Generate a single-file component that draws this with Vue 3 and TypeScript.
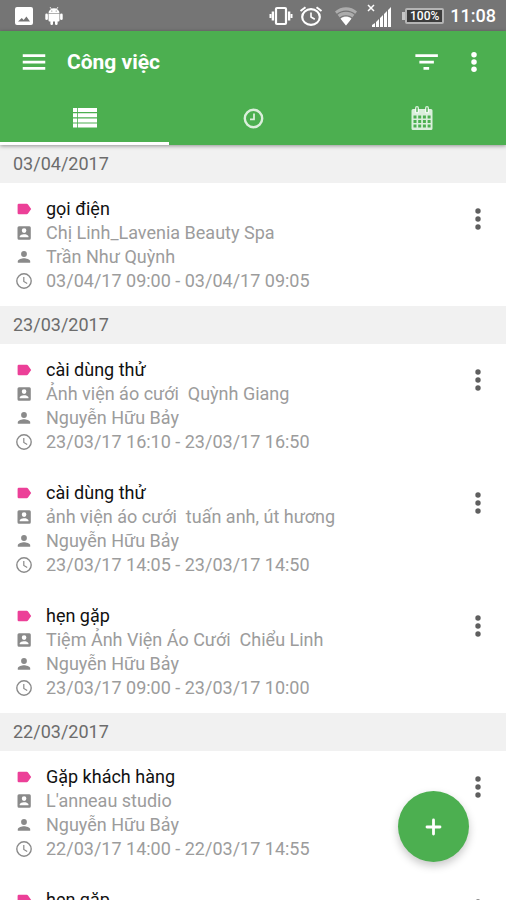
<script setup lang="ts">
import { ref } from 'vue'

interface Task {
  title: string
  customer: string
  owner: string
  time: string
}

interface DayGroup {
  date: string
  tasks: Task[]
}

type TabId = 'list' | 'clock' | 'calendar'

const activeTab = ref<TabId>('list')

const tabs: { id: TabId; label: string }[] = [
  { id: 'list', label: 'Danh sách' },
  { id: 'clock', label: 'Thời gian' },
  { id: 'calendar', label: 'Lịch' },
]

const groups: DayGroup[] = [
  {
    date: '03/04/2017',
    tasks: [
      {
        title: 'gọi điện',
        customer: 'Chị Linh_Lavenia Beauty Spa',
        owner: 'Trần Như Quỳnh',
        time: '03/04/17 09:00 - 03/04/17 09:05',
      },
    ],
  },
  {
    date: '23/03/2017',
    tasks: [
      {
        title: 'cài dùng thử',
        customer: 'Ảnh viện áo cưới  Quỳnh Giang',
        owner: 'Nguyễn Hữu Bảy',
        time: '23/03/17 16:10 - 23/03/17 16:50',
      },
      {
        title: 'cài dùng thử',
        customer: 'ảnh viện áo cưới  tuấn anh, út hương',
        owner: 'Nguyễn Hữu Bảy',
        time: '23/03/17 14:05 - 23/03/17 14:50',
      },
      {
        title: 'hẹn gặp',
        customer: 'Tiệm Ảnh Viện Áo Cưới  Chiểu Linh',
        owner: 'Nguyễn Hữu Bảy',
        time: '23/03/17 09:00 - 23/03/17 10:00',
      },
    ],
  },
  {
    date: '22/03/2017',
    tasks: [
      {
        title: 'Gặp khách hàng',
        customer: "L'anneau studio",
        owner: 'Nguyễn Hữu Bảy',
        time: '22/03/17 14:00 - 22/03/17 14:55',
      },
      {
        title: 'hẹn gặp',
        customer: '',
        owner: '',
        time: '',
      },
    ],
  },
]
</script>

<template>
  <div class="screen">
    <div class="status-bar">
      <div class="status-group status-left">
        <svg class="status-icon" viewBox="0 0 18 18" aria-hidden="true">
          <path fill="#fff" fill-rule="evenodd" d="M2 0h14a2 2 0 0 1 2 2v14a2 2 0 0 1-2 2H2a2 2 0 0 1-2-2V2a2 2 0 0 1 2-2zM3 14.500h12l-3.600-5-2.700 3.400-1.900-2z" />
        </svg>
        <svg class="status-icon" viewBox="0 0 18 18" aria-hidden="true">
          <g fill="#fff">
            <path d="M3.500 6.200a5.500 5 0 0 1 11 0z" />
            <path d="M3.500 6.800h11v6.700a1 1 0 0 1-1 1h-9a1 1 0 0 1-1-1z" />
            <rect x="0.300" y="6.500" width="2.600" height="6.500" rx="1.300" />
            <rect x="15.100" y="6.500" width="2.600" height="6.500" rx="1.300" />
            <rect x="5.400" y="12" width="2.600" height="6" rx="1.200" />
            <rect x="10" y="12" width="2.600" height="6" rx="1.200" />
          </g>
          <path d="M5 0l1.600 2.400M13 0l-1.600 2.400" stroke="#fff" stroke-width="0.800" />
          <circle cx="6.800" cy="4" r="0.600" fill="#757575" />
          <circle cx="11.200" cy="4" r="0.600" fill="#757575" />
        </svg>
      </div>
      <div class="status-group status-right">
        <svg class="status-wide" viewBox="0 0 24 20" aria-hidden="true">
          <rect x="7" y="2" width="10" height="16" rx="1" fill="none" stroke="#fff" stroke-width="2.200" />
          <path d="M3.900 5.500v9M20.100 5.500v9" stroke="#fff" stroke-width="2.400" />
          <path d="M1.500 8v4M22.500 8v4" stroke="#fff" stroke-width="2" />
        </svg>
        <svg class="status-wide" viewBox="0 0 24 20" aria-hidden="true">
          <ellipse cx="12" cy="11" rx="8.800" ry="7.800" fill="none" stroke="#fff" stroke-width="2.200" />
          <path d="M1.500 5l5-3.800M22.500 5l-5-3.800" stroke="#fff" stroke-width="2" />
          <path d="M12 6.500V11l3.800 2.300" fill="none" stroke="#fff" stroke-width="1.600" />
        </svg>
        <svg class="status-wide wifi" viewBox="0 0 24 20" aria-hidden="true">
          <path d="M1 5.500C7-.2 17-.2 23 5.500L12 19.500z" fill="#fff" fill-opacity="0.400" />
          <path d="M3 8.500c5-4.500 13-4.500 18 0M5.800 12c3.500-3 8.900-3 12.400 0" fill="none" stroke="#757575" stroke-width="1.200" />
          <path d="M6.600 12.700c3-2.600 7.800-2.600 10.800 0L12 19.500z" fill="#fff" />
        </svg>
        <svg class="signal" viewBox="0 0 26 24" aria-hidden="true">
          <path d="M1 1l6 6M7 1L1 7" stroke="#fff" stroke-width="1.500" />
          <path d="M5 23v-2l3-2v4zM9 23v-5l3-3v8zM13 23v-9l3-3v12zM17 23V10l3-3v16zM21 23V6l3-3v20z" fill="#fff" />
        </svg>
        <span class="battery">
          <span class="battery-nub"></span>
          <span class="battery-body">100%</span>
        </span>
        <span class="clock">11:08</span>
      </div>
    </div>

    <header class="app-header">
      <div class="toolbar">
        <button class="icon-button" type="button" aria-label="Menu">
          <svg viewBox="0 0 24 24" fill="currentColor" aria-hidden="true">
            <path d="M3 18.200h18v-2.200H3v2.200zm0-5.100h18v-2.200H3v2.200zm0-7.300v2.200h18V5.800H3z" />
          </svg>
        </button>
        <h1 class="title">Công việc</h1>
        <button class="icon-button" type="button" aria-label="Lọc">
          <svg viewBox="0 0 24 24" fill="currentColor" aria-hidden="true">
            <path d="M10 18.200h4.500v-2.200H10v2.200zM3.500 5.800v2.200h18V5.800h-18zm3.200 7.300h11.600v-2.200H6.700v2.200z" />
          </svg>
        </button>
        <button class="icon-button" type="button" aria-label="Tùy chọn">
          <svg viewBox="0 0 24 24" fill="currentColor" aria-hidden="true">
            <circle cx="12" cy="6.200" r="2.200" />
            <circle cx="12" cy="12" r="2.200" />
            <circle cx="12" cy="17.800" r="2.200" />
          </svg>
        </button>
      </div>
      <div class="tabs" role="tablist">
        <button
          v-for="tab in tabs"
          :key="tab.id"
          class="tab"
          :class="{ active: tab.id === activeTab }"
          type="button"
          role="tab"
          :aria-selected="tab.id === activeTab"
          :aria-label="tab.label"
          @click="activeTab = tab.id"
        >
          <svg v-if="tab.id === 'list'" viewBox="0 0 24 24" fill="currentColor" aria-hidden="true">
            <path d="M1 2h4v4H1zM5.800 2H25v4H5.800zM1 7.200h4v4H1zM5.800 7.200H25v4H5.800zM1 12.400h4v4H1zM5.800 12.400H25v4H5.800zM1 17.600h4v4H1zM5.800 17.600H25v4H5.800z" />
          </svg>
          <svg v-else-if="tab.id === 'clock'" viewBox="0 0 24 24" fill="none" stroke="currentColor" aria-hidden="true">
            <circle cx="12.500" cy="12.500" r="8.700" stroke-width="2.400" />
            <path d="M13 7.500v5.800H9" stroke-width="1.800" />
          </svg>
          <svg v-else viewBox="0 0 24 24" aria-hidden="true">
            <path
              fill="currentColor"
              fill-rule="evenodd"
              d="M3 3h18a1.500 1.500 0 0 1 1.500 1.500v18A1.500 1.500 0 0 1 21 24H3a1.500 1.500 0 0 1-1.500-1.500v-18A1.500 1.500 0 0 1 3 3z
                M3.500 9.500v3h3v-3zM8.200 9.500v3h3v-3zM12.900 9.500v3h3v-3zM17.600 9.500v3h3v-3z
                M3.500 14v3h3v-3zM8.200 14v3h3v-3zM12.900 14v3h3v-3zM17.600 14v3h3v-3z
                M3.500 18.500v3h3v-3zM8.200 18.500v3h3v-3zM12.900 18.500v3h3v-3zM17.600 18.500v3h3v-3z"
            />
            <path d="M7 2v3.500M17 2v3.500" stroke="currentColor" stroke-width="4" stroke-linecap="round" />
            <path d="M7 2v3.500M17 2v3.500" stroke="#4caf50" stroke-width="1.400" stroke-linecap="round" />
          </svg>
        </button>
      </div>
    </header>

    <main class="task-list">
      <section v-for="group in groups" :key="group.date">
        <h2 class="date-header">{{ group.date }}</h2>
        <article v-for="(task, index) in group.tasks" :key="index" class="task">
          <div class="task-body">
            <h3 class="row row-title">
              <svg viewBox="0 0 16 16" fill="#ec4098" aria-hidden="true">
                <path d="M2.800 2.800h8a1.500 1.500 0 0 1 1.200.6L15.200 8 12 12.600a1.500 1.500 0 0 1-1.200.6h-8a1.200 1.200 0 0 1-1.200-1.200V4a1.200 1.200 0 0 1 1.200-1.200z" />
              </svg>
              <span>{{ task.title }}</span>
            </h3>
            <p v-if="task.customer" class="row">
              <svg viewBox="0 0 16 16" fill="#8a8a8a" aria-hidden="true">
                <path
                  fill-rule="evenodd"
                  d="M3 1.200h10.200A1.500 1.500 0 0 1 14.800 2.700v10.600a1.500 1.500 0 0 1-1.500 1.500H3A1.500 1.500 0 0 1 1.500 13.300V2.700A1.500 1.500 0 0 1 3 1.200zM8.100 3.300a2.300 2.300 0 1 0 0 4.600 2.300 2.300 0 0 0 0-4.600zM3.700 12.300h8.800v-.8c0-1.500-3-2.300-4.400-2.300s-4.400.8-4.400 2.300z"
                />
              </svg>
              <span>{{ task.customer }}</span>
            </p>
            <p v-if="task.owner" class="row">
              <svg viewBox="0 0 16 16" fill="#8a8a8a" aria-hidden="true">
                <circle cx="8" cy="5" r="2.900" />
                <path d="M1.800 13.800v-1.400C1.800 10.300 6 9.300 8 9.300s6.200 1 6.200 3.100v1.400z" />
              </svg>
              <span>{{ task.owner }}</span>
            </p>
            <p v-if="task.time" class="row">
              <svg viewBox="0 0 16 16" fill="none" stroke="#8a8a8a" aria-hidden="true">
                <circle cx="8" cy="8" r="7.200" stroke-width="1.400" />
                <path d="M7.800 4v4.400l3.400 2" stroke-width="1.200" />
              </svg>
              <span>{{ task.time }}</span>
            </p>
          </div>
          <button class="more" type="button" aria-label="Thao tác">
            <svg viewBox="0 0 32 32" fill="#5f5f5f" aria-hidden="true">
              <circle cx="16" cy="8" r="2.700" />
              <circle cx="16" cy="16" r="2.700" />
              <circle cx="16" cy="24" r="2.700" />
            </svg>
          </button>
        </article>
      </section>
    </main>

    <button class="fab" type="button" aria-label="Thêm công việc">
      <svg viewBox="0 0 18 18" aria-hidden="true">
        <path d="M8.500 2v14M2 9h13" stroke="#fff" stroke-width="2.800" stroke-linecap="round" />
      </svg>
    </button>
  </div>
</template>

<style>
body {
  margin: 0;
  background: #fff;
}
</style>

<style scoped>
.screen {
  position: relative;
  display: flex;
  flex-direction: column;
  height: 100vh;
  overflow: hidden;
  background: #fff;
  font-family: Roboto, "Noto Sans", sans-serif;
}

button {
  padding: 0;
  border: 0;
  background: none;
  color: inherit;
  font: inherit;
  cursor: pointer;
}

h1,
h2,
h3,
p {
  margin: 0;
}

svg {
  display: block;
  overflow: visible;
}

.status-bar {
  display: flex;
  flex: none;
  align-items: center;
  justify-content: space-between;
  height: 31px;
  padding: 0 10px 0 15px;
  background: #757575;
  color: #fff;
}

.status-group {
  display: flex;
  align-items: center;
}

.status-left {
  gap: 12px;
}

.status-right {
  gap: 6px;
}

.status-icon {
  width: 18px;
  height: 18px;
}

.status-wide {
  width: 24px;
  height: 20px;
}

.wifi {
  margin: 0 3px 0 5px;
}

.signal {
  width: 26px;
  height: 24px;
}

.battery {
  display: flex;
  align-items: center;
  margin-left: 3px;
}

.battery-nub {
  width: 3px;
  height: 8px;
  background: #c8c8c8;
}

.battery-body {
  box-sizing: border-box;
  height: 16px;
  padding: 0 3px;
  border: 2px solid #b4b4b4;
  border-radius: 2px;
  background: #3c3c3c;
  font-size: 12px;
  font-weight: 500;
  line-height: 12px;
}

.clock {
  font-size: 18px;
  font-weight: 500;
  line-height: 24px;
}

.app-header {
  position: relative;
  z-index: 1;
  flex: none;
  background: #4caf50;
  box-shadow: 0 1px 4px rgba(0, 0, 0, 0.4);
  color: #fff;
}

.toolbar {
  display: flex;
  align-items: center;
  gap: 18px;
  height: 62px;
  padding: 0 17px 0 19px;
}

.title {
  flex: 1;
  font-size: 21px;
  font-weight: 700;
  line-height: 28px;
}

.icon-button {
  flex: none;
  width: 30px;
  height: 30px;
}

.icon-button svg {
  width: 30px;
  height: 30px;
}

.tabs {
  display: grid;
  grid-template-columns: repeat(3, 1fr);
}

.tab {
  display: flex;
  align-items: center;
  justify-content: center;
  height: 52px;
  border-bottom: 3px solid transparent;
  color: rgba(255, 255, 255, 0.8);
}

.tab.active {
  border-bottom-color: #fff;
  color: #fff;
}

.tab svg {
  width: 24px;
  height: 24px;
}

.task-list {
  flex: 1;
  min-height: 0;
  overflow-y: auto;
  scrollbar-width: none;
}

.date-header {
  padding: 0 13px;
  background: #f1f1f1;
  color: #6c6c6c;
  font-size: 18px;
  font-weight: 400;
  line-height: 38px;
}

.task {
  display: flex;
  align-items: flex-start;
  justify-content: space-between;
  padding: 13px 12px 13px 16px;
}

.task-body {
  min-width: 0;
}

.row {
  display: flex;
  align-items: center;
  gap: 14px;
  height: 24px;
  color: #9c9c9c;
  font-size: 18px;
  font-weight: 400;
  line-height: 24px;
  white-space: pre;
}

.row-title {
  height: 25px;
  color: #111;
}

.row svg {
  flex: none;
  width: 16px;
  height: 16px;
}

.more {
  flex: none;
  width: 32px;
  height: 32px;
  margin-top: 7px;
}

.more svg {
  width: 32px;
  height: 32px;
}

.fab {
  position: absolute;
  right: 37px;
  bottom: 38px;
  z-index: 2;
  display: flex;
  align-items: center;
  justify-content: center;
  width: 71px;
  height: 71px;
  border-radius: 50%;
  background: #4caf50;
  box-shadow: 0 4px 9px rgba(0, 0, 0, 0.22);
}

.fab svg {
  width: 18px;
  height: 18px;
}
</style>
